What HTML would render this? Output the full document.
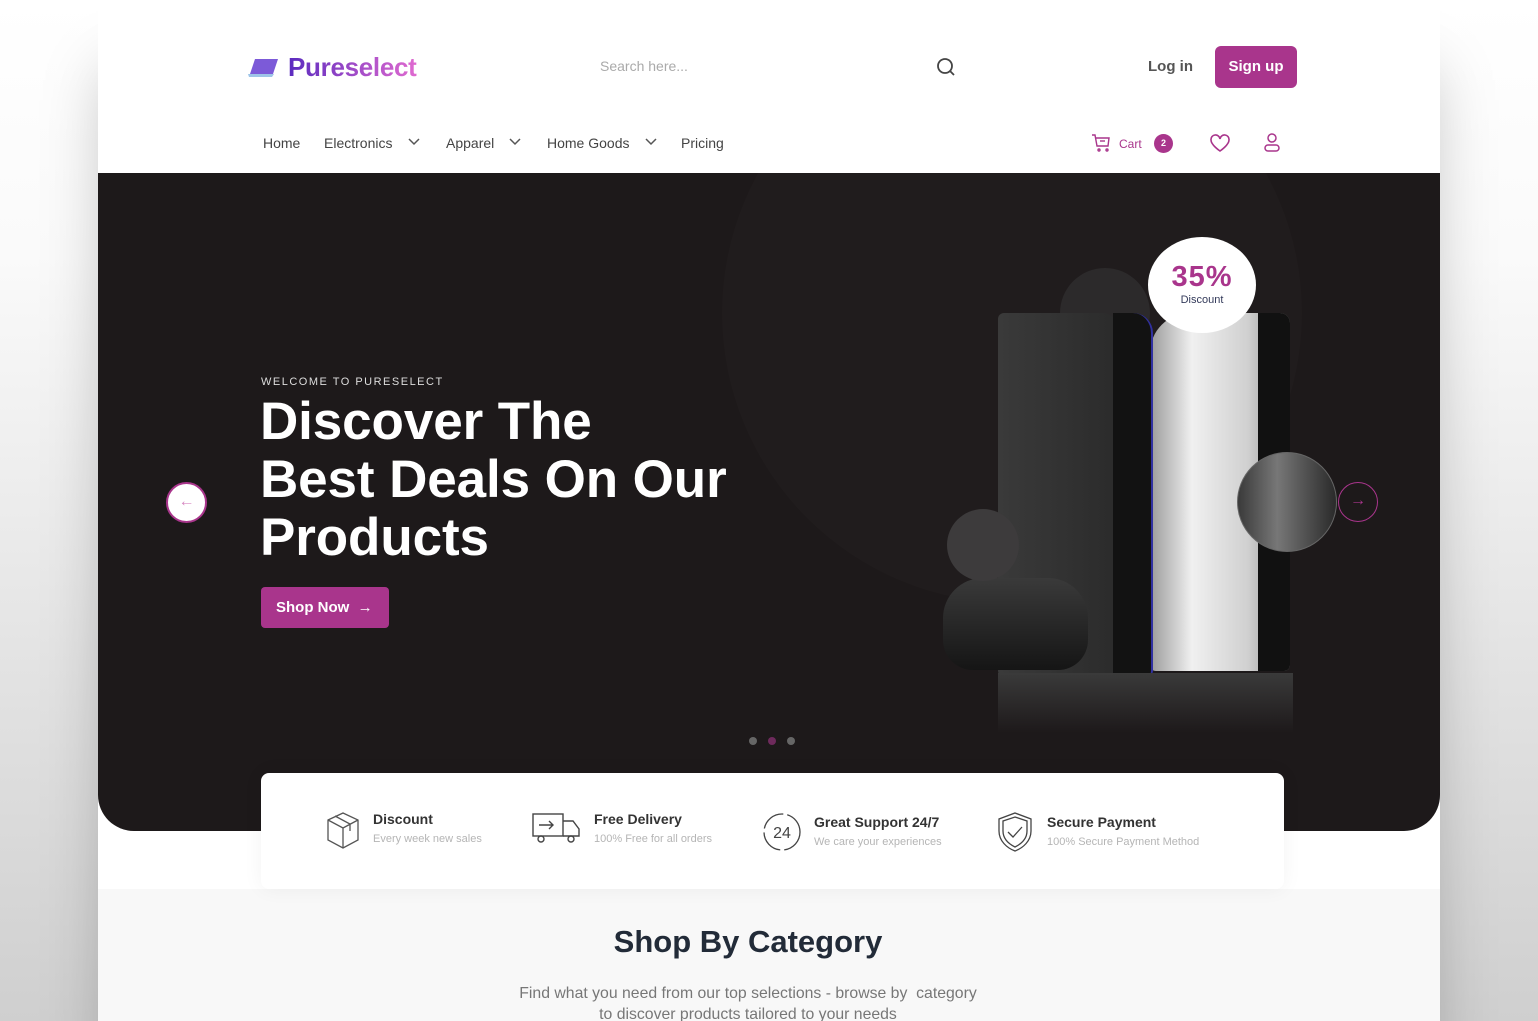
<!DOCTYPE html>
<html><head><meta charset="utf-8"><style>
*{margin:0;padding:0;box-sizing:border-box}
body{width:1538px;height:1021px;overflow:hidden;font-family:"Liberation Sans",sans-serif;background:linear-gradient(180deg,#fff 0%,#fafafa 25%,#e6e6e6 60%,#cfcfcf 100%);position:relative}
.card{position:absolute;left:98px;top:0;width:1342px;height:1021px;background:#fff;overflow:hidden;box-shadow:0 60px 60px -10px rgba(0,0,0,.25)}
.abs{position:absolute}
.logo{left:150px;top:52px;font-size:26px;font-weight:bold;background:linear-gradient(90deg,#5b2bbf,#e06ad0);-webkit-background-clip:text;color:transparent;letter-spacing:-.3px}
.nav{top:135px;font-size:14px;color:#444}
.hero{left:0;top:173px;width:1342px;height:658px;background:#1d191a;border-radius:0 0 36px 36px;overflow:hidden}
.feat{left:163px;top:773px;width:1023px;height:116px;background:#fff;border-radius:8px;box-shadow:0 0 20px rgba(0,0,0,.05)}
.ft{font-size:14px;color:#333;font-weight:600}
.fs{font-size:11px;color:#b5b5b5;margin-top:6px}
</style></head><body>
<div class="card">
 <svg class="abs" style="left:150px;top:58px" width="32" height="20" viewBox="0 0 32 20"><path d="M7 1h23l-5 15H2z" fill="#7c5ad8"/><path d="M0 16h26l-2 3H1z" fill="#9ec5e8"/></svg>
 <div class="abs logo" style="left:190px">Pureselect</div>
 <div class="abs" style="left:502px;top:58px;font-size:14px;color:#aaa">Search here...</div>
 <svg class="abs" style="left:838px;top:57px" width="20" height="20" viewBox="0 0 20 20" fill="none" stroke="#444" stroke-width="1.8"><circle cx="9" cy="9" r="7"/><path d="M14 14l4 4"/></svg>
 <div class="abs" style="left:1050px;top:58px;font-size:15px;color:#555;font-weight:600">Log in</div>
 <div class="abs" style="left:1117px;top:46px;width:82px;height:42px;background:#a9358c;border-radius:6px;color:#fff;font-size:15px;font-weight:600;text-align:center;line-height:42px">Sign up</div>
 <div class="abs nav" style="left:165px">Home</div>
 <div class="abs nav" style="left:226px">Electronics</div>
 <div class="abs nav" style="left:348px">Apparel</div>
 <div class="abs nav" style="left:449px">Home Goods</div>
 <div class="abs nav" style="left:583px">Pricing</div>
 <svg class="abs" style="left:308px;top:136px" width="320" height="12" viewBox="0 0 320 12" fill="none" stroke="#555" stroke-width="1.5"><path d="M3 3l5 5 5-5M104 3l5 5 5-5M240 3l5 5 5-5"/></svg>
 <svg class="abs" style="left:993px;top:134px" width="20" height="18" viewBox="0 0 20 18" fill="none" stroke="#a9358c" stroke-width="1.4"><path d="M1 1h3l2 11h11l1-8H5"/><circle cx="8" cy="16" r="1"/><circle cx="16" cy="16" r="1"/><path d="M9 7h5"/></svg>
 <div class="abs" style="left:1021px;top:137px;font-size:12px;color:#a9358c">Cart</div>
 <div class="abs" style="left:1056px;top:134px;width:19px;height:19px;border-radius:50%;background:#a9358c;color:#fff;font-size:9px;text-align:center;line-height:19px;font-weight:bold">2</div>
 <svg class="abs" style="left:1112px;top:134px" width="20" height="18" viewBox="0 0 20 18" fill="none" stroke="#a9358c" stroke-width="1.6"><path d="M10 17S1 11 1 6a4.5 4.5 0 0 1 9-1 4.5 4.5 0 0 1 9 1c0 5-9 11-9 11z"/></svg>
 <svg class="abs" style="left:1166px;top:133px" width="16" height="20" viewBox="0 0 16 20" fill="none" stroke="#a9358c" stroke-width="1.5"><circle cx="8" cy="5" r="4"/><rect x="1" y="12" width="14" height="6" rx="3"/></svg>

 <div class="abs hero">
  <div class="abs" style="left:624px;top:-150px;width:580px;height:580px;border-radius:50%;background:#201c1d"></div>
  <div class="abs" style="left:163px;top:203px;font-size:11px;color:#ddd;letter-spacing:1.5px">WELCOME TO PURESELECT</div>
  <div class="abs" style="left:162px;top:220px;font-size:53px;line-height:58px;color:#fff;font-weight:bold;letter-spacing:-.1px">Discover The<br>Best Deals On Our<br>Products</div>
  <div class="abs" style="left:163px;top:414px;width:128px;height:41px;background:#a9358c;border-radius:4px;color:#fff;font-size:15px;font-weight:600;line-height:41px;padding-left:15px">Shop Now &nbsp;→</div>
  <div class="abs" style="left:68px;top:309px;width:41px;height:41px;border-radius:50%;background:#fff;border:2px solid #a9358c;color:#d78ac2;text-align:center;line-height:36px;font-size:16px">←</div>
  <div class="abs" style="left:1240px;top:309px;width:40px;height:40px;border-radius:50%;border:1.5px solid #a9358c;color:#a9358c;text-align:center;line-height:36px;font-size:16px">→</div>
  <div class="abs" style="left:962px;top:95px;width:90px;height:90px;border-radius:50%;background:#2c2a2b"></div>
  <div class="abs" style="left:1052px;top:140px;width:140px;height:358px;border-radius:40px 10px 6px 6px;background:linear-gradient(90deg,#9a9a9a,#f0f0f0 30%,#d0d0d0 70%,#888);"></div>
  <div class="abs" style="left:1160px;top:140px;width:32px;height:358px;border-radius:0 10px 6px 0;background:#111"></div>
  <div class="abs" style="left:900px;top:140px;width:120px;height:362px;border-radius:6px 16px 4px 4px;background:linear-gradient(90deg,#3a3a3a,#2b2b2b)"></div>
  <div class="abs" style="left:1015px;top:140px;width:40px;height:362px;border-radius:0 20px 4px 0;background:#121212;border-right:2px solid #3030a0"></div>
  <div class="abs" style="left:900px;top:500px;width:295px;height:60px;background:linear-gradient(180deg,#3a3a3a,rgba(30,26,27,0))"></div>
  <div class="abs" style="left:845px;top:405px;width:145px;height:92px;border-radius:40px 40px 30px 30px;background:linear-gradient(180deg,#3a3a3a,#151515)"></div>
  <div class="abs" style="left:849px;top:336px;width:72px;height:72px;border-radius:50%;background:#3d3b3c"></div>
  <div class="abs" style="left:1139px;top:279px;width:100px;height:100px;border-radius:50%;background:linear-gradient(90deg,#3a3a3a,#777 40%,#2a2a2a);border:1px solid #666"></div>
  <div class="abs" style="left:1050px;top:64px;width:108px;height:96px;border-radius:50%;background:#fff;text-align:center">
   <div style="margin-top:24px;font-size:29px;font-weight:bold;color:#a9358c;letter-spacing:1px">35%</div>
   <div style="font-size:11px;color:#333a5a">Discount</div>
  </div>
  <div class="abs" style="left:651px;top:564px;width:8px;height:8px;border-radius:50%;background:#666"></div>
  <div class="abs" style="left:670px;top:564px;width:8px;height:8px;border-radius:50%;background:#6e2a5c"></div>
  <div class="abs" style="left:689px;top:564px;width:8px;height:8px;border-radius:50%;background:#666"></div>
 </div>
 <div class="abs" style="left:0;top:889px;width:1342px;height:132px;background:#f8f8f8"></div>
 <div class="abs feat">
  <svg class="abs" style="left:64px;top:37px" width="36" height="40" viewBox="0 0 36 40" fill="none" stroke="#555" stroke-width="1.3"><path d="M3 10l15-7 15 7v20l-15 8-15-8z"/><path d="M3 10l15 8 15-8M18 18v20M10 6l15 8v7"/></svg>
  <div class="abs" style="left:112px;top:38px"><div class="ft">Discount</div><div class="fs">Every week new sales</div></div>
  <svg class="abs" style="left:270px;top:38px" width="52" height="34" viewBox="0 0 52 34" fill="none" stroke="#444" stroke-width="1.4"><rect x="2" y="3" width="30" height="22"/><path d="M32 10h10l6 8v7H32M8 14h14M18 10l4 4-4 4"/><circle cx="10" cy="28" r="3"/><circle cx="40" cy="28" r="3"/></svg>
  <div class="abs" style="left:333px;top:38px"><div class="ft">Free Delivery</div><div class="fs">100% Free for all orders</div></div>
  <svg class="abs" style="left:500px;top:38px" width="42" height="42" viewBox="0 0 42 42" fill="none" stroke="#444" stroke-width="1.3"><circle cx="21" cy="21" r="18" stroke-dasharray="26 4"/><text x="21" y="27" font-size="16" text-anchor="middle" fill="#444" stroke="none" font-family="Liberation Sans">24</text></svg>
  <div class="abs" style="left:553px;top:41px"><div class="ft">Great Support 24/7</div><div class="fs">We care your experiences</div></div>
  <svg class="abs" style="left:735px;top:38px" width="38" height="42" viewBox="0 0 38 42" fill="none" stroke="#444" stroke-width="1.3"><path d="M19 2l16 6v12c0 10-8 17-16 20C11 37 3 30 3 20V8z"/><path d="M19 6l12 4v10c0 8-6 13-12 16C13 33 7 28 7 20V10z"/><path d="M12 21l5 5 9-10"/></svg>
  <div class="abs" style="left:786px;top:41px"><div class="ft">Secure Payment</div><div class="fs">100% Secure Payment Method</div></div>
 </div>
 <div class="abs" style="left:0;top:924px;width:1300px;text-align:center;font-size:31px;font-weight:600;color:#222b38">Shop By Category</div>
 <div class="abs" style="left:0;top:983px;width:1300px;text-align:center;font-size:15.8px;line-height:21px;color:#777">Find what you need from our top selections - browse by &nbsp;category<br>to discover products tailored to your needs</div>
</div>
</body></html>
